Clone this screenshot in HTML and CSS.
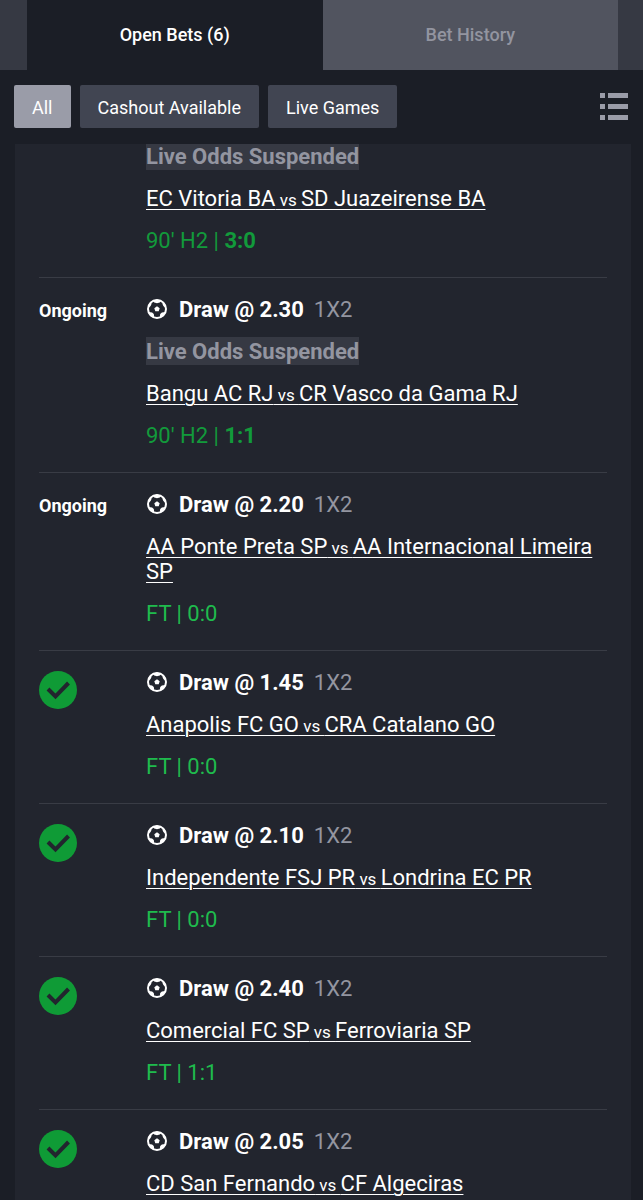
FILE: index.html
```html
<!DOCTYPE html>
<html lang="en">
<head>
<meta charset="utf-8">
<meta name="viewport" content="width=device-width, initial-scale=1">
<title>Open Bets</title>
<link rel="stylesheet" href="styles.css">
</head>
<body>
<svg class="sprite" aria-hidden="true">
  <symbol id="ball" viewBox="0 0 20 20">
    <circle cx="10" cy="10" r="9" fill="none" stroke="currentColor" stroke-width="2"/>
    <path fill="currentColor" d="M10 7.200l2.700 2-1 3.100H8.300l-1-3.100zM5.500 1.500L7.200 3.400 10 4.200l2.800-.8 1.700-1.900L10 .5zM1 9.500l2.600-2.400L4.500 5l-.1-2.500L2 5zM19 9.500l-2.600-2.400L15.500 5l.1-2.500L18 5zM1.500 13l3.600.4 1.700 1.700.5 3.700-3.600-1.600zM18.500 13l-3.600.4-1.700 1.700-.5 3.700 3.600-1.600z"/>
  </symbol>
  <symbol id="won" viewBox="0 0 38 38">
    <circle cx="19" cy="19" r="19" fill="#0f9b36"/>
    <path d="M9 18l7.500 7.500L29.500 12" fill="none" stroke="#22252e" stroke-width="4"/>
  </symbol>
</svg>
<nav class="tabs">
  <button class="tab tab-active" type="button">Open Bets (6)</button>
  <button class="tab" type="button">Bet History</button>
</nav>
<div class="filters">
  <button class="filter filter-active" type="button">All</button>
  <button class="filter" type="button">Cashout Available</button>
  <button class="filter" type="button">Live Games</button>
  <button class="view" type="button" aria-label="List view">
    <svg class="view-icon" viewBox="0 0 28 27" aria-hidden="true"><path fill="#9a9ca8" d="M0 0h5v5H0zM8 0h20v5H8zM0 11h5v5H0zM8 11h20v5H8zM0 22h5v5H0zM8 22h20v5H8z"/></svg>
  </button>
</div>
<main class="bets">
  <article class="bet bet-first">
    <div class="status"></div>
    <div class="details">
      <p class="line"><span class="suspended">Live Odds Suspended</span></p>
      <a class="line teams" href="#">EC Vitoria BA<small class="vs"> vs </small>SD Juazeirense BA</a>
      <p class="line live">90' H2 | <b>3:0</b></p>
    </div>
  </article>
  <article class="bet">
    <div class="status">Ongoing</div>
    <div class="details">
      <p class="line pick"><svg class="ball"><use href="#ball"/></svg><b>Draw @ 2.30</b><span class="market">1X2</span></p>
      <p class="line"><span class="suspended">Live Odds Suspended</span></p>
      <a class="line teams" href="#">Bangu AC RJ<small class="vs"> vs </small>CR Vasco da Gama RJ</a>
      <p class="line live">90' H2 | <b>1:1</b></p>
    </div>
  </article>
  <article class="bet">
    <div class="status">Ongoing</div>
    <div class="details">
      <p class="line pick"><svg class="ball"><use href="#ball"/></svg><b>Draw @ 2.20</b><span class="market">1X2</span></p>
      <a class="line teams" href="#">AA Ponte Preta SP<small class="vs"> vs </small>AA Internacional Limeira SP</a>
      <p class="line final">FT | 0:0</p>
    </div>
  </article>
  <article class="bet">
    <div class="status"><svg class="won" role="img" aria-label="Won"><use href="#won"/></svg></div>
    <div class="details">
      <p class="line pick"><svg class="ball"><use href="#ball"/></svg><b>Draw @ 1.45</b><span class="market">1X2</span></p>
      <a class="line teams" href="#">Anapolis FC GO<small class="vs"> vs </small>CRA Catalano GO</a>
      <p class="line final">FT | 0:0</p>
    </div>
  </article>
  <article class="bet">
    <div class="status"><svg class="won" role="img" aria-label="Won"><use href="#won"/></svg></div>
    <div class="details">
      <p class="line pick"><svg class="ball"><use href="#ball"/></svg><b>Draw @ 2.10</b><span class="market">1X2</span></p>
      <a class="line teams" href="#">Independente FSJ PR<small class="vs"> vs </small>Londrina EC PR</a>
      <p class="line final">FT | 0:0</p>
    </div>
  </article>
  <article class="bet">
    <div class="status"><svg class="won" role="img" aria-label="Won"><use href="#won"/></svg></div>
    <div class="details">
      <p class="line pick"><svg class="ball"><use href="#ball"/></svg><b>Draw @ 2.40</b><span class="market">1X2</span></p>
      <a class="line teams" href="#">Comercial FC SP<small class="vs"> vs </small>Ferroviaria SP</a>
      <p class="line final">FT | 1:1</p>
    </div>
  </article>
  <article class="bet">
    <div class="status"><svg class="won" role="img" aria-label="Won"><use href="#won"/></svg></div>
    <div class="details">
      <p class="line pick"><svg class="ball"><use href="#ball"/></svg><b>Draw @ 2.05</b><span class="market">1X2</span></p>
      <a class="line teams" href="#">CD San Fernando<small class="vs"> vs </small>CF Algeciras</a>
    </div>
  </article>
</main>
</body>
</html>
```
FILE: styles.css
```css
* { box-sizing: border-box; }
body {
  margin: 0;
  height: 100vh;
  display: flex;
  flex-direction: column;
  overflow: hidden;
  background: #1b1e26;
  color: #fff;
  font-family: Roboto, "Liberation Sans", sans-serif;
}
button { border: 0; padding: 0; font-family: inherit; color: inherit; }
.sprite { display: none; }
.tabs { flex: none; display: flex; padding: 0 25px 0 27px; background: #363943; }
.tab { flex: 1; height: 70px; padding-bottom: 2px; font-size: 18px; font-weight: 500; color: #9395a0; background: #51545f; }
.tab-active { color: #fff; background: #1b1e26; }
.filters { flex: none; display: flex; align-items: center; gap: 9px; padding: 15px 15px 16px 14px; }
.filter { height: 43px; padding: 2px 18px 0; font-size: 18px; border-radius: 2px; background: #414552; }
.filter-active { background: #9a9ca8; }
.view { display: flex; margin-left: auto; background: none; }
.view-icon { width: 28px; height: 27px; }
.bets { flex: 1; min-height: 0; overflow: hidden; margin: 0 12px 0 15px; padding: 0 24px; background: #22252e; }
.bet { display: flex; padding: 19px 0 24px; border-top: 1px solid #393c45; }
.bet-first { padding-top: 0; border-top: 0; }
.status { flex: none; width: 107px; padding-top: 1px; font-size: 18px; font-weight: 700; line-height: 25px; }
.won { display: block; width: 38px; height: 38px; }
.details { flex: 1; min-width: 0; display: flex; flex-direction: column; align-items: flex-start; gap: 17px; }
.line { margin: 0; font-size: 22px; line-height: 25px; }
.pick { display: flex; align-items: center; gap: 10px; }
.ball { width: 20px; height: 20px; margin: 0 1px 2px; }
.pick b { margin-left: 1px; }
.market { color: #9395a0; }
.suspended { padding: 2px 0 1px; font-weight: 700; color: #9395a0; background: #363943; }
.teams { color: #fff; text-decoration: underline; text-decoration-thickness: 1px; text-underline-offset: 3px; }
.vs { font-size: 17px; line-height: 1; }
.live { color: #129a3b; }
.final { color: #1fbb4d; }
```
